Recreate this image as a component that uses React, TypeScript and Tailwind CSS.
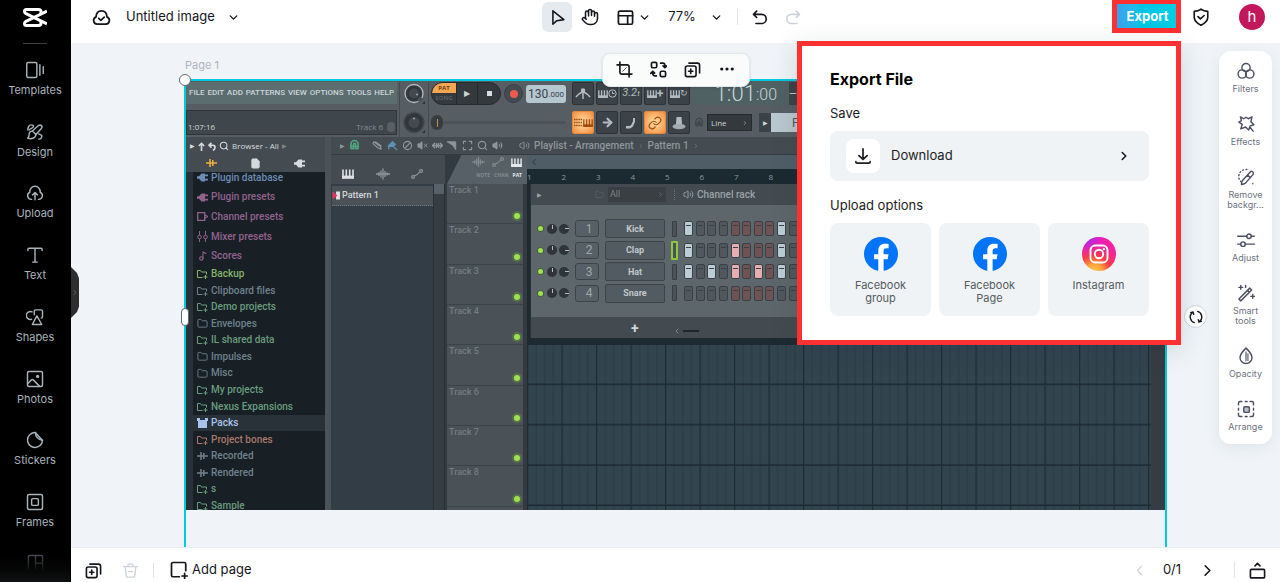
import React from "react";
import {
  ArrowRight,
  ChevronDown,
  ChevronLeft,
  ChevronRight,
  Ellipsis,
  File as FileIcon,
  Folder,
  Hand,
  Link,
  Magnet,
  Music2,
  Search,
  Volume2,
  VolumeX,
} from "lucide-react";

type IconProps = { size?: number; sw?: number; className?: string; children: React.ReactNode };

function Icon({ size = 20, sw = 1.8, className = "", children }: IconProps) {
  return (
    <svg
      width={size}
      height={size}
      viewBox="0 0 24 24"
      fill="none"
      stroke="currentColor"
      strokeWidth={sw}
      strokeLinecap="round"
      strokeLinejoin="round"
      aria-hidden="true"
      className={`shrink-0 ${className}`}
    >
      {children}
    </svg>
  );
}

/* ---------- left navigation ---------- */

const navItems: { label: string; icon: React.ReactNode }[] = [
  {
    label: "Templates",
    icon: (
      <>
        <rect x="1" y="2" width="13.5" height="20" rx="2" />
        <path d="M18.500 5v14M23 7.500v9" />
      </>
    ),
  },
  {
    label: "Design",
    icon: (
      <>
        <path d="M20.500 3.500c1.200 1.200.8 3-.3 4.300l-7 7.600-4.600-4.600 7.600-7c1.300-1.100 3.100-1.500 4.300-.3z" />
        <path d="M8.600 10.800c-3 0-4.400 2-4.400 4.600 0 2.200-.7 3.600-2 4.800 4.500 1.500 10.500.6 11-4.800" />
        <path d="M2.500 9.500C2 6 4 2.500 7.500 2.500c1.500 0 2.500 1 2.500 2.200C10 7 6 7 4.500 9M17 14.500l4 2c.8 2-1 5-4 5" />
      </>
    ),
  },
  {
    label: "Upload",
    icon: (
      <>
        <path d="M7.500 20.500H7a5 5 0 0 1-2-9.500C4.800 6.500 8 3 12 3s7.200 3.500 7 8a5 5 0 0 1-2 9.500h-.5" />
        <path d="M12 21v-9M8.800 14.500 12 11.500l3.200 3" />
      </>
    ),
  },
  {
    label: "Text",
    icon: <path d="M2.500 6V4.500A1.500 1.500 0 0 1 4 3h16a1.500 1.500 0 0 1 1.500 1.500V6M12 3v18.500M9 21.500h6" />,
  },
  {
    label: "Shapes",
    icon: (
      <>
        <path d="M8 5.200a5.300 5.300 0 1 0-.5 9.800" />
        <path d="M11 9V4.200A1.700 1.700 0 0 1 12.700 2.500h7.600A1.700 1.700 0 0 1 22 4.200v7.600a1.700 1.700 0 0 1-1.700 1.700" />
        <path d="M14.500 10.500 8.500 22h12.500z" />
      </>
    ),
  },
  {
    label: "Photos",
    icon: (
      <>
        <rect x="2" y="2" width="20" height="20" rx="2" />
        <path d="m2.500 18 4.500-4.500c1-1 2-1 3 0L18 21.500" />
        <circle cx="15.500" cy="8.500" r="1.300" fill="currentColor" />
      </>
    ),
  },
  {
    label: "Stickers",
    icon: (
      <>
        <path d="M12.500 2A10 10 0 1 0 22 12.500C19 9.500 15 5 12.500 2z" />
        <path d="M12.500 2c.3 5.500 3.500 9.500 9.500 10.500" />
      </>
    ),
  },
  {
    label: "Frames",
    icon: (
      <>
        <rect x="2" y="2" width="20" height="20" rx="2" />
        <rect x="7.500" y="7.500" width="9" height="9" rx="1.500" />
      </>
    ),
  },
];

function SideNav() {
  return (
    <aside className="relative flex w-[71px] shrink-0 flex-col items-center bg-black pr-px text-[#a9b3bb]">
      <a href="#home" aria-label="Home" className="mt-2 block">
        <svg width="24" height="19" viewBox="0 0 24 19" fill="none" stroke="#fff" strokeWidth="3" strokeLinejoin="round" aria-hidden="true">
          <path d="M24 3.200 3 13.300C1.800 14 1.500 14.500 1.500 15.500c0 1.200.6 2 1.800 2H15.500c1.500 0 2.500-.8 2.500-2.300V13" />
          <path d="M24 15.800 3 5.700C1.800 5 1.500 4.500 1.500 3.500c0-1.200.6-2 1.800-2H15.500c1.500 0 2.500.8 2.500 2.300V6" />
        </svg>
      </a>
      <hr className="mt-4 w-6 border-[#3c3f42]" />
      <nav className="mt-1 grid h-[494px] w-full grid-rows-8">
        {navItems.map((n) => (
          <a key={n.label} href={`#${n.label}`} className="flex flex-col items-center justify-center gap-[3px] pt-px text-[11px] leading-4">
            <Icon size={18} sw={1.900}>{n.icon}</Icon>
            {n.label}
          </a>
        ))}
      </nav>
      <div className="flex w-full flex-1 justify-center bg-linear-to-b from-black to-[#101112] pt-3 text-[#34383b]">
        <svg width="17" height="17" viewBox="0 0 24 24" fill="none" stroke="url(#fade-out)" strokeWidth="2" aria-hidden="true">
          <defs>
            <linearGradient id="fade-out" gradientUnits="userSpaceOnUse" x1="0" y1="0" x2="0" y2="22">
              <stop offset="0" stopColor="#4a4e52" />
              <stop offset="1" stopColor="#101112" />
            </linearGradient>
          </defs>
          <path d="M2 22V4a2 2 0 0 1 2-2h16a2 2 0 0 1 2 2v18M12 2v20M12 13h10" />
        </svg>
      </div>
      <button
        aria-label="Expand panel"
        className="absolute top-[267px] left-full z-10 flex h-[51px] w-2 items-center justify-center bg-[#2e2e2e] text-[#808080] [clip-path:polygon(0_0,75%_12%,100%_22%,100%_78%,75%_88%,0_100%)]"
      >
        <ChevronRight size={9} strokeWidth={2} />
      </button>
    </aside>
  );
}

/* ---------- top and bottom bars ---------- */

function DuplicateIcon({ size = 18 }: { size?: number }) {
  return (
    <Icon size={size} sw={2.300}>
      <rect x="2" y="7" width="15" height="15" rx="2.500" />
      <path d="M7 3h12a3 3 0 0 1 3 3v11M9.500 11.500v6M6.500 14.500h6" />
    </Icon>
  );
}

function TopBar() {
  return (
    <header className="grid h-[43px] shrink-0 grid-cols-[1fr_auto_1fr] items-start bg-white text-[#14161c]">
      <div className="flex h-[34px] items-center pl-[21px]">
        <Icon size={19} sw={2.200}>
          <path d="M6.500 20.500a4.800 4.800 0 0 1-1.300-9.300C5 6.500 8 3.500 12 3.500s7 3 6.800 7.700a4.800 4.800 0 0 1-1.300 9.300z" />
          <path d="m8.500 13 2.700 2.500 4.300-4" />
        </Icon>
        <button className="ml-[15px] flex items-center gap-3 text-[13px]">
          Untitled image
          <ChevronDown size={13} strokeWidth={2.500} />
        </button>
      </div>
      <div className="flex h-[34px] items-center pr-[7px]">
        <button aria-label="Select" className="flex h-[30px] w-[30px] items-center justify-center rounded-md bg-[#e4eaee]">
          <Icon size={17} sw={2.200}>
            <path d="M5.500 2.500v19l5.500-5 10-1.500z" />
          </Icon>
        </button>
        <button aria-label="Pan" className="ml-[9px]">
          <Hand size={18} strokeWidth={2} />
        </button>
        <button aria-label="Layout" className="ml-[18px] flex items-center gap-1">
          <Icon size={17} sw={2.400}>
            <rect x="2" y="3" width="20" height="18.500" rx="2" />
            <path d="M2 9.500h20M15 9.500v12" />
          </Icon>
          <ChevronDown size={13} strokeWidth={2.500} />
        </button>
        <button className="ml-[17px] flex items-center gap-[14px] text-[13px]">
          77%
          <ChevronDown size={13} strokeWidth={2.500} />
        </button>
        <span className="ml-[14px] h-4 w-px bg-[#dfe4e8]" />
        <button aria-label="Undo" className="ml-[13px]">
          <Icon size={17} sw={2.300}>
            <path d="M8 3 3.500 7.500 8 12M4 7.500h11a6.500 6.500 0 0 1 0 13H7" />
          </Icon>
        </button>
        <button aria-label="Redo" className="ml-[17px] text-[#ccd3da]">
          <Icon size={17} sw={2.300}>
            <path d="m16 3 4.500 4.500L16 12M20 7.500H9a6.500 6.500 0 0 0 0 13h8" />
          </Icon>
        </button>
      </div>
      <div className="flex items-start justify-end pr-[15px]">
        <button className="h-[33px] w-[69px] border-[5px] border-t-4 border-[#fd3131] bg-linear-to-r from-[#3aa0f0] via-[#00c4e6] via-40% to-[#00cfe2] pl-0.5 text-[13px] leading-4 font-bold text-white">
          Export
        </button>
        <span className="flex h-[34px] items-center">
          <button aria-label="Privacy" className="ml-[11px]">
            <Icon size={18} sw={2.200}>
              <path d="M12 1.500c3 2.300 5.500 2.800 9 3v8c0 5-4.500 8-9 10.500-4.500-2.500-9-5.500-9-10.500v-8c3.500-.2 6-.7 9-3z" />
              <path d="m8 11.500 3.200 3 5-4.500" />
            </Icon>
          </button>
          <button aria-label="Account" className="ml-[29px] flex size-[26px] items-center justify-center rounded-full bg-[#c2185b] text-[15px] text-white">
            h
          </button>
        </span>
      </div>
    </header>
  );
}

function BottomBar() {
  return (
    <footer className="flex h-[35px] shrink-0 items-center border-t border-[#e9edf0] bg-white px-[14px] pt-[11px] pb-px text-[#14161c]">
      <div className="flex h-full flex-1 items-center">
        <button aria-label="Duplicate page"><DuplicateIcon size={17} /></button>
        <button aria-label="Delete page" className="ml-5 text-[#ccd3da]">
          <Icon size={17} sw={1.900}>
            <path d="M2 6.500h20M8 6.500l1-3.500h6l1 3.500M4.500 6.500l1.500 13a2 2 0 0 0 2 1.800h8a2 2 0 0 0 2-1.800l1.500-13M9 13.500h6" />
          </Icon>
        </button>
        <span className="ml-[14px] h-[15px] w-px bg-[#dfe4e8]" />
        <button className="ml-4 flex items-center gap-1 text-[13px]">
          <Icon size={18} sw={2.300}>
            <path d="M12.500 21H4a2 2 0 0 1-2-2V4a2 2 0 0 1 2-2h15a2 2 0 0 1 2 2v9M19.500 16.500v7M16 20h7" />
          </Icon>
          Add page
        </button>
      </div>
      <div className="flex h-full items-center">
        <button aria-label="Previous page" className="text-[#ccd3da]"><ChevronLeft size={17} strokeWidth={1.800} /></button>
        <span className="w-[50px] pr-0.5 text-center text-[13px]">0/1</span>
        <button aria-label="Next page"><ChevronRight size={19} strokeWidth={2} /></button>
        <span className="ml-[17px] h-4 w-px bg-[#dfe4e8]" />
        <button aria-label="Show pages" className="ml-[14px]">
          <Icon size={17} sw={2.300}>
            <rect x="2" y="10.500" width="20" height="12" rx="1.500" />
            <path d="M8.500 5.500 12 2l3.500 3.500" />
          </Icon>
        </button>
      </div>
    </footer>
  );
}

/* ---------- artwork on the page: music workstation ---------- */

function Knob({ big = false }: { big?: boolean }) {
  return (
    <svg width="24" height="23" viewBox="0 0 24 23" fill="none" aria-hidden="true">
      <circle cx="12" cy="11.500" r={big ? 10 : 9} fill="#343a3f" stroke={big ? "#40474c" : "#b4bcbf"} strokeWidth={big ? 2 : 1.300} strokeDasharray={big ? "1 1" : undefined} />
      {!big && <path d="M12 11.500 21.500 17l-4 4z" fill="#4b5257" />}
      <circle cx="12" cy="11.500" r={big ? 8 : 6.500} fill="#30363a" />
      <circle cx="12" cy="11.500" r={big ? 5.500 : 5} fill="#42494f" />
      <circle cx={big ? 12 : 15} cy={big ? 7.500 : 12.500} r="1" fill="#a0a8ac" />
      <path d="m20 22 3-3v3z" fill="#2b3034" />
    </svg>
  );
}

function PianoKeys({ size = 12 }: { size?: number }) {
  return (
    <svg width={size} height={size} viewBox="0 0 12 12" fill="none" stroke="currentColor" aria-hidden="true">
      <path d="M1 1.500v9M4.300 1.500v8M7.700 1.500v8M11 1.500v9" strokeWidth="1.600" />
      <path d="M.2 9.200h11.600" strokeWidth="3.200" />
    </svg>
  );
}

function Wave({ size = 14 }: { size?: number }) {
  return (
    <svg width={size} height="12" viewBox="0 0 14 12" stroke="currentColor" strokeWidth="1.300" aria-hidden="true">
      <path d="M0 6h14M3 4v4M5 2.500v7M7 .5v11M9 3v6M11 4.500v3" />
    </svg>
  );
}

function Pulse() {
  return (
    <svg width="11" height="10" viewBox="0 0 11 10" stroke="currentColor" strokeWidth="1.500" aria-hidden="true">
      <path d="M0 5h11M4 1v8M6.800 2v6" />
    </svg>
  );
}

function Automation() {
  return (
    <svg width="12" height="12" viewBox="0 0 12 12" fill="none" stroke="currentColor" strokeWidth="1.200" aria-hidden="true">
      <circle cx="2" cy="9" r="1.400" />
      <circle cx="10" cy="3" r="1.400" />
      <path d="M3.200 8.200c2-.5 3.500-1.700 5.500-4.200" />
    </svg>
  );
}

function Plug() {
  return (
    <svg width="11" height="9" viewBox="0 0 11 9" fill="currentColor" aria-hidden="true">
      <path d="M0 3.200h2L4.500 .5h3.500v8H4.500L2 5.800H0zM8 1.500h3v1.700H8zM8 5.800h3v1.700H8z" />
    </svg>
  );
}

function FolderPlus() {
  return (
    <svg width="11" height="10" viewBox="0 0 11 10" fill="none" stroke="currentColor" strokeWidth="1" aria-hidden="true">
      <path d="M5.500 8.500h-5v-7h3l1 1.500h5v2.500M8.500 6v4M6.500 8h4" />
    </svg>
  );
}

function FlButton({ lit = false, children }: { lit?: boolean; children: React.ReactNode }) {
  return (
    <span
      className={
        lit
          ? "flex h-[23px] w-[22px] items-center justify-center rounded-[2px] border border-[#e8873a] bg-radial from-[#ffe3a8] to-[#f08a35] text-[#a04c10]"
          : "flex h-[23px] w-[22px] items-center justify-center rounded-[2px] border border-[#2c3236] bg-[#3c4348] text-[#b4bbbe]"
      }
    >
      {children}
    </span>
  );
}

function FlToolbar() {
  return (
    <div className="flex h-[56px] gap-[2px] bg-[#565e64] pt-px text-[#ccd5d7]">
      <div className="flex w-[211px] shrink-0 flex-col gap-[6px]">
        <div className="flex h-[22px] items-center justify-between bg-[#5b6d6f] px-[3px] text-[8px] font-medium whitespace-nowrap">
          <span>FILE</span><span>EDIT</span><span>ADD</span><span>PATTERNS</span><span>VIEW</span><span>OPTIONS</span><span>TOOLS</span><span>HELP</span>
        </div>
        <div className="flex h-[25px] items-end justify-between border border-[#2f3539] bg-[#40474c] px-px pb-px font-['Open_Sans',sans-serif] text-[8px] leading-3">
          <span>1:07:16</span>
          <span className="flex items-center gap-1 text-[#858d92]">Track 6 <span className="h-2.5 w-2 rounded-sm bg-[#596065]" /></span>
        </div>
      </div>
      <div className="flex w-[30px] shrink-0 flex-col items-center gap-[6px] border-x border-[#454c51]">
        <Knob />
        <Knob big />
      </div>
      <div className="flex shrink-0 flex-col gap-[6px]">
        <div className="flex items-center">
          <span className="flex h-[23px] w-[70px] overflow-hidden rounded-full border border-[#262b2f] bg-[#33393d]">
            <span className="flex w-[24px] flex-col text-center font-['Open_Sans',sans-serif] text-[6px] leading-[10px] font-bold">
              <span className="bg-[#f3a754] text-[#6e3c10]">PAT</span>
              <span className="text-[#555d62]">SONG</span>
            </span>
            <span className="flex w-[22px] items-center justify-center border-x border-[#24292c] text-[8px]">▶</span>
            <span className="flex flex-1 items-center justify-center"><span className="size-[5px] bg-[#d7dcde]" /></span>
          </span>
          <span className="ml-[3px] flex size-[19px] items-center justify-center rounded-full border border-[#383f44] bg-[#454c51]">
            <span className="size-2 rounded-full bg-[#f05a4c]" />
          </span>
          <span className="ml-[3px] flex h-[18px] w-[40px] items-center justify-center rounded-[3px] bg-[#b7c7cf] text-[12px] text-[#37434b]">
            130<span className="pt-0.5 text-[8px]">.000</span>
          </span>
          <span className="ml-[6px] flex gap-[2px]">
            <FlButton>
              <svg width="16" height="12" viewBox="0 0 16 12" stroke="currentColor" fill="none" strokeWidth="1.500" aria-hidden="true"><path d="M1 9c2-3 4-4 7-5.500C11 5 13 6 15 9M8 1v10" /><circle cx="8" cy="2.500" r="1.500" fill="currentColor" /></svg>
            </FlButton>
            <FlButton><span className="flex items-center"><PianoKeys size={10} /><svg width="9" height="9" viewBox="0 0 9 9" fill="none" stroke="currentColor" aria-hidden="true"><circle cx="4.500" cy="4.500" r="3.700" /><path d="M4.500 2.500v2h2" /></svg></span></FlButton>
            <FlButton><span className="text-[11px] italic">3.2<span className="text-[8px]">t</span></span></FlButton>
            <FlButton><span className="flex items-center text-[12px] font-bold"><PianoKeys size={10} />+</span></FlButton>
            <FlButton><span className="flex items-center text-[9px]"><PianoKeys size={10} />↻</span></FlButton>
          </span>
          <span className="ml-[3px] flex h-[23px] w-[92px] items-end justify-end bg-[#4f6163] pr-2 text-[22px] leading-[22px] font-light text-[#c5d6d8]">
            1:01<span className="text-[16px] leading-[20px]">:00</span>
          </span>
          <span className="ml-1 flex h-[23px] w-[60px] items-center bg-[#3c4348] text-[10px]">—</span>
        </div>
        <div className="flex items-center">
          <span className="flex w-[135px] items-center">
            <span className="flex h-[15px] w-3 items-center justify-center rounded-full bg-[#363c40]"><span className="h-2 w-px bg-[#c98b4a]" /></span>
            <span className="h-[3px] flex-1 rounded bg-[#4c545a]" />
          </span>
          <span className="ml-[6px] flex gap-[2px]">
            <FlButton lit>
              <span className="flex items-center">
                <svg width="9" height="9" viewBox="0 0 9 9" stroke="currentColor" strokeWidth="1.600" strokeDasharray="1.500 .7" aria-hidden="true"><path d="M0 1.500h8.500M0 4.500h8.500M0 7.500h8.500" /></svg>
                <PianoKeys size={10} />
              </span>
            </FlButton>
            <FlButton><ArrowRight size={13} strokeWidth={4} /></FlButton>
            <FlButton><svg width="12" height="12" viewBox="0 0 12 12" fill="currentColor" aria-hidden="true"><path d="M1 9h3c3 0 2.500-3 4-4.500V1h2v4C8.500 7 9 10 5 11.500H1z" /></svg></FlButton>
            <FlButton lit><Link size={14} strokeWidth={2} /></FlButton>
            <FlButton><svg width="14" height="14" viewBox="0 0 14 14" fill="currentColor" aria-hidden="true"><path d="M4.500 1h5l.5 7H4z" /><ellipse cx="7" cy="10.500" rx="6.500" ry="2.800" fill="#a4acb0" /></svg></FlButton>
          </span>
          <Magnet size={10} strokeWidth={3} className="ml-[4px] -rotate-45 text-[#3f464b]" />
          <span className="ml-[3px] flex h-[17px] w-[45px] items-center justify-between border border-[#252a2d] bg-[#33393d] px-[3px] font-['Open_Sans',sans-serif] text-[8px]">
            Line <ChevronRight size={6} />
          </span>
          <span className="ml-[7px] flex h-[19px] w-[12px] items-center justify-center bg-[#3c4348] text-[6px]">▶</span>
          <span className="flex h-[19px] w-[100px] items-center bg-[#b9c7ce] pl-[21px] text-[12px] text-[#4c565c]">P</span>
        </div>
      </div>
    </div>
  );
}

const presetRows = [
  { label: "Plugin database", tone: "text-[#6d8cb4]", kind: "plug" },
  { label: "Plugin presets", tone: "text-[#92628d]", kind: "plug" },
  { label: "Channel presets", tone: "text-[#92628d]", kind: "channel" },
  { label: "Mixer presets", tone: "text-[#92628d]", kind: "mixer" },
  { label: "Scores", tone: "text-[#92628d]", kind: "note" },
];

const folderRows = [
  { label: "Backup", tone: "text-[#85b26b]", kind: "plus" },
  { label: "Clipboard files", tone: "text-[#70808c]", kind: "plus" },
  { label: "Demo projects", tone: "text-[#699b7d]", kind: "plus" },
  { label: "Envelopes", tone: "text-[#70808c]", kind: "folder" },
  { label: "IL shared data", tone: "text-[#699b7d]", kind: "plus" },
  { label: "Impulses", tone: "text-[#70808c]", kind: "folder" },
  { label: "Misc", tone: "text-[#70808c]", kind: "folder" },
  { label: "My projects", tone: "text-[#699b7d]", kind: "plus" },
  { label: "Nexus Expansions", tone: "text-[#699b7d]", kind: "plus" },
  { label: "Packs", tone: "bg-[#293238] text-[#a9c2ec]", kind: "packs" },
  { label: "Project bones", tone: "text-[#a9776b]", kind: "plus" },
  { label: "Recorded", tone: "text-[#70808c]", kind: "wave" },
  { label: "Rendered", tone: "text-[#70808c]", kind: "wave" },
  { label: "s", tone: "text-[#699b7d]", kind: "plus" },
  { label: "Sample", tone: "text-[#699b7d]", kind: "plus" },
];

function RowIcon({ kind }: { kind: string }) {
  if (kind === "plug") return <Plug />;
  if (kind === "plus") return <FolderPlus />;
  if (kind === "folder") return <Folder size={11} strokeWidth={2} />;
  if (kind === "note") return <Music2 size={10} strokeWidth={2.500} />;
  if (kind === "wave") return <Pulse />;
  if (kind === "packs")
    return (
      <svg width="11" height="10" viewBox="0 0 11 10" fill="currentColor" aria-hidden="true"><path d="M0 0h3v2h5V0h3v3h-1v7H1V3H0z" /></svg>
    );
  if (kind === "mixer")
    return (
      <svg width="11" height="11" viewBox="0 0 11 11" fill="none" stroke="currentColor" aria-hidden="true"><path d="M2.500 0v4M2.500 8v3M8.500 0v4M8.500 8v3" /><circle cx="2.500" cy="6" r="1.800" /><circle cx="8.500" cy="6" r="1.800" /></svg>
    );
  return (
    <svg width="11" height="9" viewBox="0 0 11 9" fill="none" stroke="currentColor" strokeWidth="1.300" aria-hidden="true"><path d="M.7.700h7v7.600h-7zM8 3l2.500 1.500L8 6" /></svg>
  );
}

function BrowserList({ rows, className }: { rows: typeof presetRows; className: string }) {
  return (
    <ul className={className}>
      {rows.map((r) => (
        <li key={r.label} className={`flex items-center gap-[3px] pl-1 ${r.tone}`}>
          <span className="flex w-[11px] justify-center"><RowIcon kind={r.kind} /></span>
          {r.label}
        </li>
      ))}
    </ul>
  );
}

function FlBrowser() {
  return (
    <div className="flex w-[139px] shrink-0 flex-col bg-[#182026]">
      <div className="flex h-[35px] shrink-0 flex-col bg-[#444c51] text-[#d5dadc]">
        <div className="flex h-[18px] items-center gap-[3px] pl-1 font-['Open_Sans',sans-serif] text-[8px]">
          <span className="text-[6px]">▶</span>
          <svg width="7" height="9" viewBox="0 0 7 9" fill="none" stroke="currentColor" strokeWidth="1.600" aria-hidden="true"><path d="M3.500 9V1.500M.8 4l2.700-2.700L6.200 4" /></svg>
          <svg width="8" height="9" viewBox="0 0 8 9" fill="none" stroke="currentColor" strokeWidth="1.600" aria-hidden="true"><path d="M3.500.8 1 3.200l2.500 2.400M1.500 3.200H5C8 3.500 7.500 7 5 8.500" /></svg>
          <Search size={10} strokeWidth={2.500} />
          <span>Browser - All</span>
          <span className="text-[6px] text-[#7d868b]">▶</span>
        </div>
        <div className="flex h-[16px] items-center justify-around px-1">
          <span className="text-[#f0b03a]"><Pulse /></span>
          <FileIcon size={11} fill="currentColor" />
          <Plug />
        </div>
      </div>
      <div className="flex min-h-0 flex-1 overflow-hidden">
        <div className="w-[7px] shrink-0 bg-[#2a3237]" />
        <div className="-mt-1 flex-1 text-[10px] leading-3 font-medium">
          <BrowserList rows={presetRows} className="grid h-[98px] grid-rows-5" />
          <BrowserList rows={folderRows} className="grid h-[248px] grid-rows-[repeat(15,minmax(0,1fr))]" />
        </div>
      </div>
    </div>
  );
}

const channels = [
  { name: "Kick", on: [0, 8] },
  { name: "Clap", on: [0, 4, 8] },
  { name: "Hat", on: [0, 2, 4, 6, 8] },
  { name: "Snare", on: [] as number[] },
];

function stepTone(i: number, on: boolean) {
  const red = i % 8 >= 4;
  if (on) return red ? "bg-[#e5aeb0]" : "bg-[#bccdd6]";
  return red ? "bg-[#6e5254]" : "bg-[#50585d]";
}

function ChannelRack() {
  return (
    <div className="ml-[3px] flex h-[154px] w-[430px] shrink-0 flex-col border-l border-[#2b3338] bg-[#434b50] text-[#9aa2a6]">
      <div className="flex h-[21px] shrink-0 items-center text-[10px]">
        <span className="ml-[6px] w-[58px] text-[6px]">▶</span>
        <Folder size={9} className="text-[#596166]" />
        <span className="ml-1 flex h-[15px] w-[58px] items-center justify-between bg-[#393f43] px-[2px] text-[9px] text-[#7c8488]">
          All <ChevronRight size={7} />
        </span>
        <span className="mx-[8px] h-[11px] border-l border-dotted border-[#6d767b]" />
        <Volume2 size={11} />
        <span className="ml-[3px] font-medium">Channel rack</span>
      </div>
      <div className="flex h-[112px] shrink-0 flex-col justify-center bg-[#5d666b]">
        <div className="grid h-[86px] grid-rows-4">
          {channels.map((c, row) => (
            <div key={c.name} className="flex items-center">
              <span className="ml-[7px] size-[5px] rounded-full bg-[#a0e054] ring-1 ring-[#48633a]" />
              <span className="ml-[4px] flex size-[10px] justify-center rounded-full bg-[#2f353a]"><span className="mt-px h-1 w-px bg-[#b4bcc0]" /></span>
              <span className="ml-[2px] flex size-[10px] items-center justify-end rounded-full bg-[#2f353a]"><span className="h-px w-1 bg-[#b4bcc0]" /></span>
              <span className="ml-[6px] flex h-[17px] w-6 items-center justify-center rounded-[3px] border border-[#3c4449] bg-[#566066] pl-1 text-[12px] leading-3 text-[#9ea7ab]">{row + 1}</span>
              <span className="ml-[6px] flex h-[19px] w-[60px] items-center justify-center rounded-[2px] border border-[#3d454a] bg-[#525b61] text-[9px] leading-3 font-bold text-[#c0c7ca]">{c.name}</span>
              <span className={c.name === "Clap" ? "ml-[6px] h-[19px] w-[7px] rounded-[1px] border-2 border-[#8dc63f] bg-[#4b5358]" : "mr-px ml-[7px] h-[16px] w-[5px] rounded-[1px] border border-[#383f44] bg-[#4b5358]"} />
              <span className="ml-[6px] grid w-[186px] grid-cols-16">
                {Array.from({ length: 16 }, (_, i) => (
                  <span key={i} className={`flex h-[15px] w-[9px] justify-center rounded-[2px] border border-[#3a4146] ${stepTone(i, c.on.includes(i))}`}>
                    <span className="mt-[3px] h-px w-[5px] bg-[#3a4146]" />
                  </span>
                ))}
              </span>
            </div>
          ))}
        </div>
      </div>
      <div className="flex flex-1 items-center">
        <span className="ml-[100px] text-[14px] leading-4 font-bold text-[#d0d6d8]">+</span>
        <ChevronLeft size={8} className="mt-[7px] ml-[34px]" />
        <span className="mt-[7px] ml-[2px] h-[2px] w-4 bg-[#20272b]" />
      </div>
    </div>
  );
}

function GridLines() {
  return (
    <svg width="100%" height="100%" aria-hidden="true" className="block">
      <defs>
        <pattern id="beats" width="34.500" height="40.300" patternUnits="userSpaceOnUse">
          <rect width="34.500" height="40.300" fill="#32444e" />
          <path d="M9.100 0v40.300M17.700 0v40.300M26.300 0v40.300" stroke="#2a3b45" />
          <path d="M.5 0v40.300" stroke="#1d2c35" strokeWidth="1.500" />
          <path d="M0 39.500h34.500" stroke="#1d2c35" strokeWidth="1.600" />
        </pattern>
      </defs>
      <rect width="100%" height="100%" fill="url(#beats)" />
    </svg>
  );
}

function FlPlaylist() {
  return (
    <div className="flex min-w-0 flex-1 flex-col bg-[#444c51]">
      <div className="flex h-[18px] shrink-0 items-center gap-1 border-b border-[#353c41] pl-[9px] text-[10px] font-medium whitespace-nowrap text-[#8e969a]">
        <span className="text-[6px]">▶</span>
        <Magnet size={11} strokeWidth={3.500} className="mr-2 -rotate-45 text-[#4fa77d]" />
        <Icon size={11} sw={2.500}><path d="M4 4l14 10 2 6-6-2L2 8zM8 4l12 9" /></Icon>
        <Icon size={11} sw={3} className="text-[#5d91b3]"><path d="M3 13 12 4l6 6-5 4zM14 14l7 7M4 14v5" fill="currentColor" /></Icon>
        <Icon size={11} sw={2.500}><circle cx="12" cy="12" r="9" /><path d="M6 18 18 6" /></Icon>
        <VolumeX size={11} fill="currentColor" />
        <Icon size={11} sw={3}><path d="M1 12h22M6 7l-5 5 5 5M18 7l5 5-5 5M10 8v8M14 8v8" /></Icon>
        <Icon size={11} sw={2}><path d="M1 4h18v17l-6-9z" fill="currentColor" /></Icon>
        <Icon size={11} sw={2.500}><path d="M3 8V3h5M16 3h5v5M21 16v5h-5M8 21H3v-5" /></Icon>
        <Search size={11} strokeWidth={2.500} />
        <Volume2 size={11} fill="currentColor" />
        <Volume2 size={11} className="ml-3" />
        <span>Playlist - Arrangement</span>
        <ChevronRight size={6} />
        <span>Pattern 1</span>
        <ChevronRight size={6} />
      </div>
      <div className="flex min-h-0 flex-1">
        <div className="flex w-[114px] shrink-0 flex-col bg-[#333d45]">
          <div className="flex h-[29px] shrink-0 items-end justify-between bg-[#444c51] pr-[22px] pb-1 pl-[11px] text-[#8e969a]">
            <span className="text-[#dde1e3]"><PianoKeys size={12} /></span>
            <Wave />
            <Automation />
          </div>
          <div className="flex min-h-0 flex-1">
            <div className="flex-1 pt-[2px]">
              <div className="ml-px flex h-[20px] items-center gap-[2px] border-b border-dotted border-[#6c767c] bg-[#4a5157] text-[#d2d7d9]">
                <svg width="8" height="9" viewBox="0 0 8 9" aria-hidden="true"><path d="M4 .5h4v8H4z" fill="#dde1e3" /><path d="M.5.5 5.500 4.500l-5 4z" fill="#e5345a" /></svg>
                <span className="text-[9px] font-medium">Pattern 1</span>
              </div>
            </div>
            <div className="w-[12px] border-x border-[#293137] bg-[#363e43]"><div className="h-[10px] bg-[#586167]" /></div>
          </div>
        </div>
        <div className="flex w-[82px] shrink-0 flex-col bg-[#333b40] pl-[2px]">
          <div className="flex h-[29px] shrink-0 flex-col items-end gap-[2px] bg-[#576066] pr-[5px] [clip-path:polygon(18%_0,100%_0,100%_100%,0_100%)]">
            <span className="mt-px flex items-center gap-[7px] text-[#838b8f]">
              <Wave size={13} /><Automation /><span className="text-[#e3e7e8]"><PianoKeys size={11} /></span>
            </span>
            <span className="flex gap-1 font-['Open_Sans',sans-serif] text-[5px] leading-[10px] font-bold text-[#838b8f]">
              <span>NOTE</span><span>CHAN</span><span className="text-[#e3e7e8]">PAT</span>
            </span>
          </div>
          <div className="min-h-0 flex-1 overflow-hidden pr-1">
            <div className="grid h-[363px] grid-rows-9">
              {Array.from({ length: 9 }, (_, i) => (
                <div key={i} className="flex justify-between border-b border-[#3b4348] bg-[#4a5258] pr-[3px] pl-[2px] text-[9px] leading-3 font-medium text-[#757d81]">
                  {i < 8 ? `Track ${i + 1}` : ""}
                  <span className="mb-1 ml-auto size-[6px] self-end rounded-full bg-[#a0e054] ring-2 ring-[#55704a]" />
                </div>
              ))}
            </div>
          </div>
        </div>
        <div className="flex min-w-0 flex-1 flex-col bg-[#1d2a31]">
          <div className="flex h-[14px] shrink-0 bg-[#4f5e66]"><ChevronLeft size={10} className="mt-0.5 ml-0.5 text-[#252d32]" /></div>
          <div className="h-[15px] shrink-0 overflow-hidden bg-[#1b2931]">
            <div className="grid w-[621px] grid-cols-18 font-['Open_Sans',sans-serif] text-[8px] leading-[15px] text-[#8a989f]">
              {Array.from({ length: 8 }, (_, i) => <span key={i}>{i + 1}</span>)}
            </div>
          </div>
          <div className="flex min-h-0 flex-1">
            <div className="flex min-w-0 flex-1 flex-col overflow-hidden">
              <ChannelRack />
              <div className="min-h-0 flex-1 pt-[7px]"><GridLines /></div>
            </div>
            <div className="w-[14px] bg-[#363d42]" />
          </div>
        </div>
      </div>
    </div>
  );
}

function Artwork() {
  return (
    <div className="flex h-[429px] flex-col overflow-hidden font-['Roboto',sans-serif]">
      <FlToolbar />
      <div className="flex min-h-0 flex-1 gap-[6px] bg-[#4b5358]">
        <FlBrowser />
        <FlPlaylist />
      </div>
    </div>
  );
}

/* ---------- floating tools ---------- */

function SelectionToolbar() {
  return (
    <div className="absolute top-[53px] left-[531px] z-10 flex h-[34px] w-[148px] items-center justify-around rounded-lg border border-[#e3e8eb] bg-[#fafcfc] px-[5px] pb-0.5 text-[#14161c] shadow-sm">
      <button aria-label="Crop">
        <Icon size={17} sw={2.300}><path d="M5.500 1.500v14a3 3 0 0 0 3 3h14M1.500 5.500h14a3 3 0 0 1 3 3v14" /><path d="m9.500 14.500 5-5" strokeWidth="1" /></Icon>
      </button>
      <button aria-label="Replace">
        <Icon size={17} sw={2.400}>
          <rect x="2" y="2" width="7.500" height="7.500" rx="2" /><rect x="14.500" y="14.500" width="7.500" height="7.500" rx="2" />
          <path d="M15 3h3a3 3 0 0 1 3 3v3M18.500 7 21 9.500 23.500 7M9 21H7a3 3 0 0 1-3-3v-3M1 17.500 4 14.500 6.500 17" />
        </Icon>
      </button>
      <button aria-label="Duplicate"><DuplicateIcon size={17} /></button>
      <button aria-label="More"><Ellipsis size={18} strokeWidth={2.300} /></button>
    </div>
  );
}

const tools: { label: string; icon: React.ReactNode }[] = [
  { label: "Filters", icon: <><circle cx="12" cy="7.500" r="5.500" /><circle cx="7" cy="16" r="5.500" /><circle cx="17" cy="16" r="5.500" /></> },
  { label: "Effects", icon: <path d="m4.500 2.500 4.500 2.500 3-2 3 2 5-2.500-1.500 6.500 4 4-5 1.500-2 5.500-4-4-6.500 2.500 2-6L2.500 9.500l3.500-2zM17 16l4.500 5.500" /> },
  {
    label: "Remove backgr...",
    icon: <><path d="M13 2a9.500 9.500 0 0 0-8 16" strokeDasharray="1 3.500" /><path d="m7 17 11-12c2-1.500 5 1 3.500 3.500L11 20.500c-2 1-5 1.500-5 1.500s0-3.500 1-5zM14 9.500l4 3.500M21 20.500v.5" /></>,
  },
  { label: "Adjust", icon: <><path d="M1 7h12M19 7h4M1 17.500h4M11 17.500h12" /><circle cx="16" cy="7" r="3" /><circle cx="8" cy="17.500" r="3" /></> },
  {
    label: "Smart tools",
    icon: <><path d="M2.500 20 17 5.500l2.500 2.500L5 22.500zM14 8.500l2.500 2.500M5 2v5M2.500 4.500h5M11.500 2v2.500M21 14v5M18.500 16.500h5" /></>,
  },
  { label: "Opacity", icon: <><path d="M12 1.500c4 4 8 7.500 8 12.500a8 8 0 0 1-16 0c0-5 4-8.500 8-12.500z" /><path d="M12 7v11M14.500 9.500v8" strokeWidth="2.500" opacity=".6" /></> },
  {
    label: "Arrange",
    icon: <><path d="M2 6.500V4a2 2 0 0 1 2-2h2.500M17.500 2H20a2 2 0 0 1 2 2v2.500M22 17.500V20a2 2 0 0 1-2 2h-2.500M6.500 22H4a2 2 0 0 1-2-2v-2.500M11 2h2.500M11 22h2.500M2 11v2.500M22 11v2.500" /><rect x="9" y="9" width="7.500" height="7.500" rx="1.500" fill="#b9bec6" /></>,
  },
];

function ToolRail() {
  return (
    <nav className="absolute top-[51px] right-2 flex w-[53px] flex-col items-center gap-[21px] rounded-xl bg-white pt-[11px] pb-3 text-[#4a5060] shadow-[0_4px_16px_rgba(30,50,70,0.08)]">
      {tools.map((t) => (
        <button key={t.label} className="flex w-10 flex-col items-center gap-1 text-[9px] leading-[10px] text-[#6b7280]">
          <Icon size={18} sw={1.900} className="text-[#4a5060]">{t.icon}</Icon>
          <span>{t.label}</span>
        </button>
      ))}
    </nav>
  );
}

function FacebookLogo() {
  return (
    <svg width="34" height="34" viewBox="0 0 34 34" aria-hidden="true">
      <circle cx="17" cy="17" r="17" fill="#0075fa" />
      <path d="M14.300 34V22.300h-4.200v-5h4.200v-3.700c0-4.500 2.600-6.900 6.500-6.900 1.300 0 2.600.1 3.800.3v4.300h-2.200c-2.100 0-2.800 1.200-2.800 2.700v3.300h4.900l-.8 5h-4.100V34a17 17 0 0 1-5.300 0z" fill="#fff" />
    </svg>
  );
}

function InstagramLogo() {
  return (
    <svg width="34" height="34" viewBox="0 0 34 34" aria-hidden="true">
      <defs>
        <radialGradient id="ig-warm" cx="35%" cy="105%" r="100%">
          <stop offset="0" stopColor="#ffd050" /><stop offset=".25" stopColor="#fca33a" /><stop offset=".5" stopColor="#fa3b45" /><stop offset=".85" stopColor="#f521a5" />
        </radialGradient>
        <radialGradient id="ig-cool" cx="15%" cy="0%" r="60%">
          <stop offset="0" stopColor="#8a2cf5" /><stop offset="1" stopColor="#e020e0" stopOpacity="0" />
        </radialGradient>
      </defs>
      <circle cx="17" cy="17" r="17" fill="url(#ig-warm)" />
      <circle cx="17" cy="17" r="17" fill="url(#ig-cool)" />
      <g fill="none" stroke="#fff" strokeWidth="1.900">
        <rect x="8.500" y="8.500" width="17" height="17" rx="4.800" />
        <circle cx="17" cy="17" r="4.200" />
      </g>
      <circle cx="21.900" cy="12.100" r="1.200" fill="#fff" />
    </svg>
  );
}

function ExportPanel() {
  return (
    <section
      aria-label="Export File"
      className="absolute top-[41px] right-[99px] z-20 w-[384px] border-[5px] border-[#fd3131] bg-white py-6 pr-[27px] pl-7 text-[#1b1d22] shadow-[0_6px_24px_rgba(30,50,70,0.16)]"
    >
      <h2 className="text-[16px] leading-[19px] font-bold text-black">Export File</h2>
      <h3 className="mt-4 text-[13px] leading-4">Save</h3>
      <button className="mt-[10px] flex h-[50px] w-full items-center rounded-lg bg-[#eff3f6] pr-[18px] pl-4 text-[13px]">
        <span className="flex size-[34px] items-center justify-center rounded-lg bg-white">
          <Icon size={18} sw={2.300}><path d="M12 2.500v14M6.500 11.500l5.500 5 5.500-5M2.500 19.500v.5c0 1 .7 1.500 1.500 1.500h16c.8 0 1.500-.5 1.500-1.500v-.5" /></Icon>
        </span>
        <span className="ml-[11px]">Download</span>
        <ChevronRight size={14} strokeWidth={2.800} className="ml-auto" />
      </button>
      <h3 className="mt-4 text-[13px] leading-4">Upload options</h3>
      <div className="mt-[10px] grid grid-cols-3 gap-2 text-[11px] leading-[13px] text-[#555b61]">
        <button className="flex h-[93px] flex-col items-center gap-2 rounded-lg bg-[#eff3f6] px-5 pt-[14px]"><FacebookLogo /><span>Facebook group</span></button>
        <button className="flex h-[93px] flex-col items-center gap-2 rounded-lg bg-[#eff3f6] px-5 pt-[14px]"><FacebookLogo /><span>Facebook Page</span></button>
        <button className="flex h-[93px] flex-col items-center gap-2 rounded-lg bg-[#eff3f6] px-5 pt-[14px]"><InstagramLogo /><span>Instagram</span></button>
      </div>
    </section>
  );
}

export default function App() {
  return (
    <div className="flex h-screen overflow-hidden bg-[#f0f4f8] font-['Inter',sans-serif]">
      <SideNav />
      <div className="relative flex min-w-0 flex-1 flex-col">
        <TopBar />
        <main className="flex min-h-0 flex-1 flex-col items-center overflow-hidden bg-[#f0f4f8]">
          <div className="flex min-h-0 w-[983px] flex-1 flex-col pt-[14px]">
            <p className="pl-px text-[11px] leading-4 text-[#b0b5c3]">Page 1</p>
            <div className="relative mt-[6px] min-h-0 flex-1 border-2 border-b-0 border-[#00cae0]">
              <Artwork />
              <span className="absolute -top-[7px] -left-[7px] size-3 rounded-full border border-[#5d6b73] bg-white" />
              <span className="absolute top-[227px] -left-[5px] h-[18px] w-2 rounded-full border border-[#5d6b73] bg-white" />
              <button aria-label="Rotate" className="absolute top-[224px] -right-[42px] flex size-[23px] items-center justify-center rounded-full border border-[#cfd8dc] bg-white text-[#14161c]">
                <Icon size={14} sw={2.400}><path d="M9 21.500A10 10 0 0 1 5 5M15 2.500a10 10 0 0 1 4 16.500M3 4.500 7 3.500 8 7.500M21 19.500l-4 1-1-4" /></Icon>
              </button>
            </div>
          </div>
        </main>
        <BottomBar />
        <SelectionToolbar />
        <ToolRail />
        <ExportPanel />
      </div>
    </div>
  );
}
